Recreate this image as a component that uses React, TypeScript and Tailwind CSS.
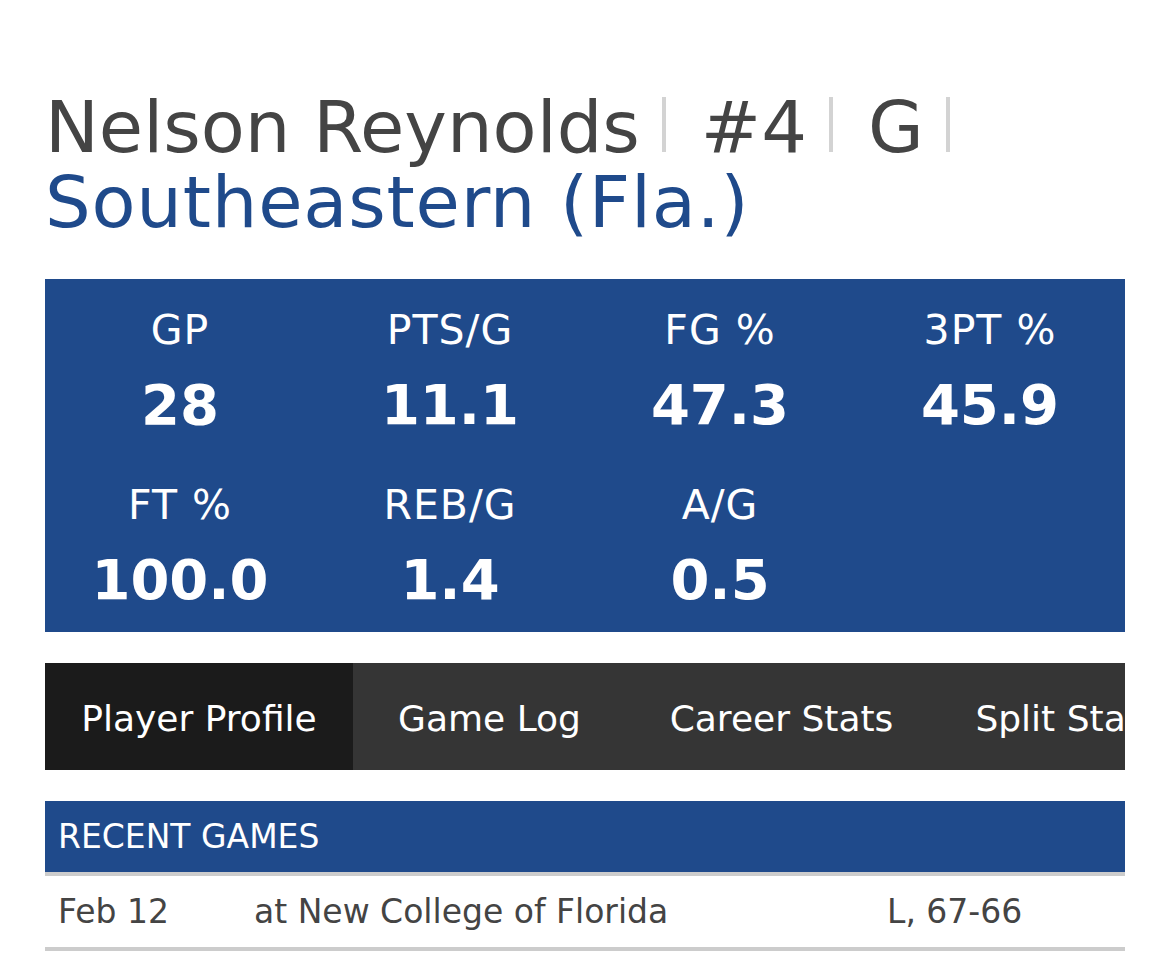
import React from "react";

const stats = [
  { label: "GP", value: "28" },
  { label: "PTS/G", value: "11.1" },
  { label: "FG %", value: "47.3" },
  { label: "3PT %", value: "45.9" },
  { label: "FT %", value: "100.0" },
  { label: "REB/G", value: "1.4" },
  { label: "A/G", value: "0.5" },
];

const tabs = [
  { name: "Player Profile", width: "w-[308px]", active: true },
  { name: "Game Log", width: "w-[273px]", active: false },
  { name: "Career Stats", width: "w-[311px]", active: false },
  { name: "Split Stats", width: "w-[260px]", active: false },
];

function Sep() {
  return <span className="inline-block w-[4px] h-[55px] bg-[#d3d3d3] ml-[22px] mr-[35px]" />;
}

function App() {
  return (
    <div className="bg-white min-h-screen px-[45px] pt-[90px] font-['DejaVu_Sans',_Verdana,_sans-serif]">
      <div className="w-[1080px] overflow-hidden">
        <h1 className="text-[72px] leading-[75px] font-normal">
          <div className="text-[#444444] whitespace-nowrap">
            Nelson Reynolds<Sep />#4<Sep />G<Sep />
          </div>
          <div className="text-[#1f4a8b] tracking-[0.8px]">Southeastern (Fla.)</div>
        </h1>

        <div className="mt-[39px] bg-[#1f4a8b] text-white grid grid-cols-4 gap-y-[52px] pt-[31px] pb-[24px]">
          {stats.map((s) => (
            <div key={s.label} className="flex flex-col items-center gap-[27px]">
              <div className="text-[41px] leading-[40px] tracking-[1px]">{s.label}</div>
              <div className="text-[56px] leading-[56px] font-bold">{s.value}</div>
            </div>
          ))}
        </div>

        <div className="mt-[31px] h-[107px] bg-[#353535] flex text-white text-[36px]">
          {tabs.map((t) => (
            <div
              key={t.name}
              className={`${t.width} shrink-0 flex items-center justify-center pt-[5px] whitespace-nowrap ${t.active ? "bg-[#1b1b1b]" : "bg-[#353535]"}`}
            >
              {t.name}
            </div>
          ))}
        </div>

        <div className="mt-[31px]">
          <div className="h-[71px] bg-[#1f4a8b] text-white text-[33px] flex items-center pl-[13px] border-b-[4px] border-[#cccccc] box-content">
            RECENT GAMES
          </div>
          <div className="h-[71px] flex items-center pl-[13px] text-[33px] text-[#444444] border-b-[4px] border-[#cccccc] box-content">
            <div className="w-[196px]">Feb 12</div>
            <div className="w-[633px]">at New College of Florida</div>
            <div>L, 67-66</div>
          </div>
        </div>
      </div>
    </div>
  );
}

export default App;
